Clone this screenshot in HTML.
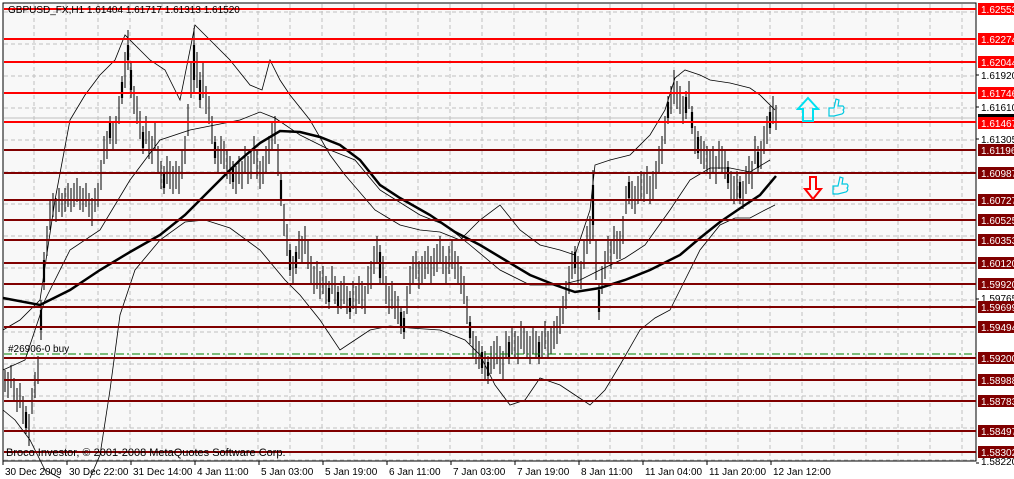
<!DOCTYPE html>
<html><head><meta charset="utf-8"><style>
html,body{margin:0;padding:0;background:#fff;}
svg{display:block;font-family:"Liberation Sans",sans-serif;}
</style></head><body>
<svg width="1014" height="479" viewBox="0 0 1014 479" xmlns="http://www.w3.org/2000/svg">
<rect x="0" y="0" width="1014" height="479" fill="#fff"/>
<rect x="3" y="3" width="973" height="458" fill="#f8f8f8" stroke="#000" stroke-width="1"/>
<g stroke="#c0c0c0" stroke-dasharray="4,3" stroke-width="1">
<path d="M34 4V460M66 4V460M98 4V460M130 4V460M162 4V460M194 4V460M226 4V460M258 4V460M290 4V460M322 4V460M354 4V460M386 4V460M418 4V460M450 4V460M482 4V460M514 4V460M546 4V460M578 4V460M610 4V460M642 4V460M674 4V460M706 4V460M738 4V460M770 4V460M802 4V460M834 4V460M866 4V460M898 4V460M930 4V460M962 4V460"/>
<path d="M4 12H975M4 44H975M4 76H975M4 108H975M4 140H975M4 172H975M4 204H975M4 236H975M4 268H975M4 300H975M4 332H975M4 364H975M4 396H975M4 428H975M4 460H975"/>
</g>
<line x1="4" y1="118" x2="975" y2="118" stroke="#c0c0c0"/>
<g fill="none" stroke="#000" stroke-width="0.8">
<path d="M3 330 L20 320 L40 300 L55 200 L70 120 L85 95 L100 75 L115 60 L125 35 L140 50 L150 60 L165 70 L180 100 L195 25 L205 35 L215 45 L230 60 L250 85 L262 90 L270 60 L280 80 L290 95 L310 120 L330 155 L345 175 L375 210 L400 225 L420 230 L440 232 L460 240 L480 220 L500 205 L520 230 L540 245 L560 250 L575 255 L590 210 L595 165 L610 160 L630 155 L650 135 L665 110 L675 78 L685 70 L700 75 L710 80 L730 83 L750 88 L760 95 L775 110"/>
<path d="M3 410 L15 420 L30 440 L45 470 L60 478 M90 478 L100 455 L110 390 L120 315 L135 270 L160 240 L185 222 L205 220 L230 228 L260 250 L285 280 L300 295 L320 320 L340 350 L355 340 L370 330 L390 326 L410 328 L440 330 L465 340 L480 355 L495 385 L510 405 L525 400 L540 378 L560 385 L575 395 L590 405 L605 390 L620 365 L640 330 L655 318 L670 310 L685 280 L700 250 L720 225 L735 218 L750 218 L765 210 L775 205"/>
<path d="M3 370 L25 360 L45 300 L70 250 L100 230 L130 180 L160 140 L190 130 L215 125 L240 120 L260 112 L275 118 L300 135 L330 150 L355 160 L380 190 L420 215 L445 225 L470 245 L500 270 L530 285 L560 285 L580 280 L600 270 L625 258 L645 245 L670 210 L690 180 L710 168 L730 168 L750 172 L770 160"/>
</g>
<path d="M3 298 L40 305 L70 290 L100 270 L130 252 L160 235 L185 215 L200 200 L220 180 L240 160 L260 143 L280 131 L300 132 L320 137 L340 145 L360 160 L380 185 L400 198 L430 215 L455 232 L480 245 L505 260 L530 275 L555 285 L575 292 L600 288 L625 280 L650 270 L680 255 L700 238 L720 222 L745 205 L760 195 L776 176" fill="none" stroke="#000" stroke-width="2.5"/>
<path stroke="#000" stroke-width="1" fill="none" d="M5 370V392M8 372V398M11 365V388M14 378V402M17 388V412M20 383V408M23 396V424M26 406V434M29 414V446M32 388V414M35 372V398M38 356V384M41 300V340M44 252V290M47 226V256M50 200V230M53 193V217M56 198V222M59 188V212M62 193V217M65 188V212M68 183V207M71 188V212M74 183V207M77 178V202M80 186V210M83 188V212M86 183V207M89 193V217M92 198V226M95 188V212M98 183V207M101 160V190M104 136V164M107 131V159M110 116V144M113 121V149M116 116V144M119 96V124M122 76V104M125 52V88M128 30V70M131 62V98M134 86V114M137 96V124M140 111V139M143 126V154M146 116V144M149 131V159M152 136V164M155 121V149M158 146V174M161 161V189M164 166V194M167 156V184M170 161V189M173 166V194M176 161V189M179 166V194M182 151V179M185 136V164M188 104V136M191 62V98M194 28V92M197 52V88M200 72V108M203 62V98M206 86V114M209 96V124M212 116V144M215 136V164M218 146V174M221 136V164M224 141V169M227 151V179M230 156V184M233 161V189M236 166V194M239 156V184M242 161V189M245 146V174M248 156V184M251 151V179M254 136V164M257 151V179M260 161V189M263 156V184M266 146V174M269 136V164M272 121V149M275 116V144M278 144V176M281 174V206M284 204V236M287 224V256M290 244V276M293 256V284M296 246V274M299 231V259M302 236V264M305 226V254M308 241V269M311 256V284M314 266V294M317 261V289M320 271V299M323 266V294M326 276V304M329 281V309M332 266V294M335 276V304M338 286V314M341 281V309M344 276V304M347 286V314M350 291V319M353 281V309M356 286V314M359 276V304M362 281V309M365 286V314M368 266V294M371 261V289M374 246V274M377 236V264M380 245V285M383 256V284M386 276V304M389 286V314M392 281V309M395 291V319M398 296V324M401 306V334M404 311V339M407 286V314M410 266V294M413 256V284M416 251V279M419 261V289M422 256V284M425 251V279M428 246V274M431 256V284M434 248V276M437 244V272M440 236V264M443 246V274M446 256V284M449 246V274M452 241V269M455 251V279M458 256V284M461 266V294M464 276V304M467 296V324M470 316V344M473 331V359M476 336V364M479 341V369M482 346V374M485 351V379M488 356V384M491 346V374M494 341V369M497 336V364M500 346V374M503 351V379M506 331V359M509 336V364M512 326V354M515 331V359M518 336V364M521 321V349M524 326V354M527 331V359M530 336V364M533 326V354M536 331V359M539 336V364M542 331V359M545 321V349M548 331V359M551 326V354M554 321V349M557 316V344M560 306V334M563 296V324M566 281V309M569 266V294M572 251V279M575 246V274M578 256V284M581 261V289M584 241V269M587 226V254M590 216V244M593 170V240M596 240V280M599 285V320M602 266V294M605 251V279M608 236V264M611 241V269M614 226V254M617 231V259M620 231V259M623 216V244M626 186V214M629 176V204M632 181V209M635 186V214M638 176V204M641 171V199M644 174V202M647 166V194M650 176V204M653 171V199M656 161V189M659 146V174M662 136V164M665 116V144M668 96V124M671 86V114M674 70V104M677 81V109M680 86V114M683 96V124M686 91V119M689 81V109M692 106V134M695 126V154M698 131V159M701 136V164M704 141V169M707 146V174M710 151V179M713 146V174M716 156V184M719 141V169M722 146V174M725 151V179M728 161V189M731 171V199M734 176V204M737 171V199M740 176V204M743 181V209M746 166V194M749 156V184M752 161V189M755 136V164M758 146V174M761 141V169M764 126V154M767 116V144M770 106V134M773 96V124M776 105V130"/>
<path stroke="#000" stroke-width="2.2" fill="none" d="M26 412V428M41 310V330M44 260V282M110 122V138M122 82V98M128 45V60M131 70V90M143 132V148M164 172V188M194 45V80M200 80V100M215 142V158M233 168V182M281 180V200M290 250V270M296 252V268M329 288V302M338 292V308M350 298V312M380 252V278M401 312V328M404 318V332M470 322V338M482 352V368M488 362V376M509 342V358M539 342V358M575 252V268M593 185V225M599 290V312M629 182V198M668 102V118M686 97V113M692 112V128M698 137V153M728 167V183M740 182V198M758 152V168M770 112V128"/>
<g stroke="#ff0000" stroke-width="2">
<path d="M4 9H976M4 39H976M4 62H976M4 93H976M4 122H976"/>
</g>
<g stroke="#800000" stroke-width="2">
<path d="M4 150H976M4 173H976M4 200H976M4 220H976M4 240H976M4 263H976M4 284H976M4 307H976M4 327H976M4 358H976M4 380H976M4 401H976M4 431H976M4 452H976"/>
</g>
<line x1="4" y1="354" x2="976" y2="354" stroke="#008000" stroke-dasharray="8,3,2,3" stroke-width="1"/>
<text x="8" y="13" font-size="10" fill="#000">GBPUSD_FX,H1  1.61404 1.61717 1.61313 1.61520</text>
<text x="8" y="352" font-size="10" fill="#000">#26906-0 buy</text>
<text x="6" y="456" font-size="11" fill="#000">Broco Investor, © 2001-2008 MetaQuotes Software Corp.</text>
<path d="M808 98 L818 109 L813 109 L813 121 L803 121 L803 109 L798 109 Z" fill="none" stroke="#00e0f0" stroke-width="2"/>
<path d="M810 177 L816 177 L816 189 L821 189 L813 199 L805 189 L810 189 Z" fill="none" stroke="#ff0000" stroke-width="2"/>
<g fill="none" stroke="#00c8e0" stroke-width="1.2">
<path d="M829 108 L834 108 L836 99 L839 100 L838 106 L843 106 Q845 108 843 110 Q845 112 842 114 L834 116 L829 116 Z"/>
<path d="M833 186 L838 186 L840 177 L843 178 L842 184 L847 184 Q849 186 847 188 Q849 190 846 192 L838 194 L833 194 Z"/>
</g>
<g stroke="#000"><path d="M976 75H979M976 107H979M976 139H979M976 299H979M976 463H979M3 461V465M67 461V465M131 461V465M195 461V465M259 461V465M323 461V465M387 461V465M451 461V465M515 461V465M579 461V465M643 461V465M707 461V465M771 461V465"/></g>
<g font-size="10" fill="#000">
<text x="981" y="79">1.61920</text>
<text x="981" y="111">1.61610</text>
<text x="981" y="143">1.61305</text>
<text x="981" y="302">1.59765</text>
<text x="981" y="465">1.58220</text>
</g>
<g font-size="10" fill="#fff">
<rect x="978" y="3" width="36" height="12" fill="#ff0000"/><text x="981" y="13">1.62553</text>
<rect x="978" y="33" width="36" height="12" fill="#ff0000"/><text x="981" y="43">1.62274</text>
<rect x="978" y="56" width="36" height="12" fill="#ff0000"/><text x="981" y="66">1.62044</text>
<rect x="978" y="87" width="36" height="12" fill="#ff0000"/><text x="981" y="97">1.61746</text>
<rect x="978" y="114" width="36" height="4" fill="#000"/>
<rect x="978" y="117" width="36" height="12" fill="#ff0000"/><text x="981" y="127">1.61467</text>
<rect x="978" y="144" width="36" height="12" fill="#800000"/><text x="981" y="154">1.61196</text>
<rect x="978" y="167" width="36" height="12" fill="#800000"/><text x="981" y="177">1.60987</text>
<rect x="978" y="194" width="36" height="12" fill="#800000"/><text x="981" y="204">1.60727</text>
<rect x="978" y="214" width="36" height="12" fill="#800000"/><text x="981" y="224">1.60525</text>
<rect x="978" y="234" width="36" height="12" fill="#800000"/><text x="981" y="244">1.60353</text>
<rect x="978" y="257" width="36" height="12" fill="#800000"/><text x="981" y="267">1.60120</text>
<rect x="978" y="278" width="36" height="12" fill="#800000"/><text x="981" y="288">1.59920</text>
<rect x="978" y="301" width="36" height="12" fill="#800000"/><text x="981" y="311">1.59699</text>
<rect x="978" y="321" width="36" height="12" fill="#800000"/><text x="981" y="331">1.59494</text>
<rect x="978" y="352" width="36" height="12" fill="#800000"/><text x="981" y="362">1.59200</text>
<rect x="978" y="374" width="36" height="12" fill="#800000"/><text x="981" y="384">1.58988</text>
<rect x="978" y="395" width="36" height="12" fill="#800000"/><text x="981" y="405">1.58783</text>
<rect x="978" y="425" width="36" height="12" fill="#800000"/><text x="981" y="435">1.58497</text>
<rect x="978" y="446" width="36" height="12" fill="#800000"/><text x="981" y="456">1.58302</text>
</g>
<g font-size="10" fill="#000">
<text x="5" y="475">30 Dec 2009</text>
<text x="69" y="475">30 Dec 22:00</text>
<text x="133" y="475">31 Dec 14:00</text>
<text x="197" y="475">4 Jan 11:00</text>
<text x="261" y="475">5 Jan 03:00</text>
<text x="325" y="475">5 Jan 19:00</text>
<text x="389" y="475">6 Jan 11:00</text>
<text x="453" y="475">7 Jan 03:00</text>
<text x="517" y="475">7 Jan 19:00</text>
<text x="581" y="475">8 Jan 11:00</text>
<text x="645" y="475">11 Jan 04:00</text>
<text x="709" y="475">11 Jan 20:00</text>
<text x="773" y="475">12 Jan 12:00</text>
</g>
</svg>
</body></html>
